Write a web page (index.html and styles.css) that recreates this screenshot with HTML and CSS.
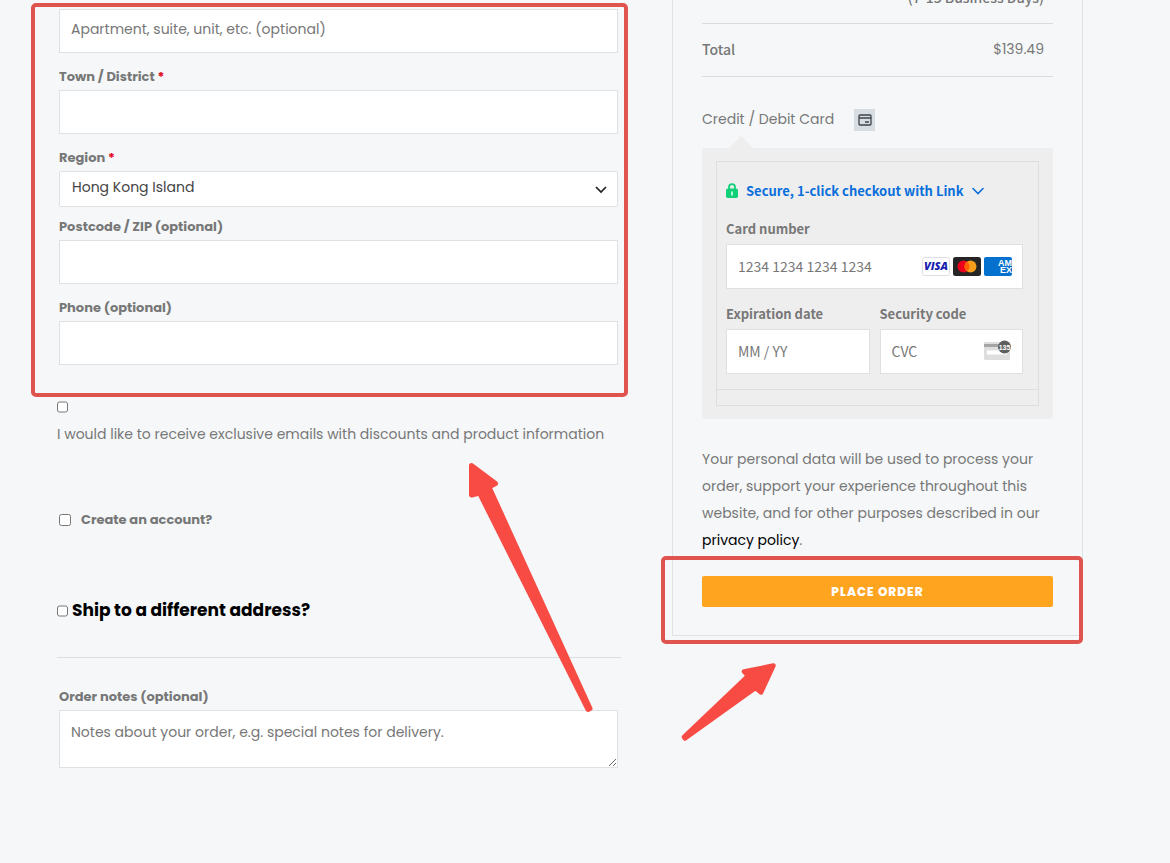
FILE: index.html
```html
<!DOCTYPE html>
<html lang="en">

<head>
    <meta charset="UTF-8">
    <meta name="viewport" content="width=device-width, initial-scale=1.0">
    <title>Checkout</title>
    <link rel="stylesheet" href="styles.css">
</head>

<body>
    <form class="checkout">
        <!-- Billing column -->
        <div class="billing">
            <div class="fields address">
                <input class="input" type="text" placeholder="Apartment, suite, unit, etc. (optional)" aria-label="Apartment, suite, unit, etc.">

                <label class="label" for="town">Town / District <span class="required">*</span></label>
                <input class="input" type="text" id="town">

                <label class="label" for="region">Region <span class="required">*</span></label>
                <div class="select">
                    <select id="region">
                        <option>Hong Kong Island</option>
                        <option>Kowloon</option>
                        <option>New Territories</option>
                    </select>
                    <svg class="select-arrow" width="12" height="8" viewBox="0 0 12 8">
                        <path d="M1 1l5 5 5-5" fill="none" stroke="#222" stroke-width="1.7" />
                    </svg>
                </div>

                <label class="label after-select" for="postcode">Postcode / ZIP (optional)</label>
                <input class="input" type="text" id="postcode">

                <label class="label" for="phone">Phone (optional)</label>
                <input class="input" type="tel" id="phone">
                <div class="mark mark-address"></div>
            </div>

            <div class="newsletter">
                <input class="check" type="checkbox" id="emails">
                <label for="emails">I would like to receive exclusive emails with discounts and product information</label>
            </div>

            <div class="account">
                <input class="check" type="checkbox" id="account">
                <label for="account">Create an account?</label>
            </div>

            <h3 class="shipping">
                <input class="check" type="checkbox" id="ship">
                <label for="ship">Ship to a different address?</label>
            </h3>

            <div class="fields notes">
                <label class="label" for="notes">Order notes (optional)</label>
                <textarea class="input textarea" id="notes" placeholder="Notes about your order, e.g. special notes for delivery."></textarea>
            </div>

            <svg class="arrow arrow-long" width="130" height="256" viewBox="466 458 130 256">
                <path d="M471.500 465.500L495.500 483.500L489 487L590 708.500L588 709.500L479.500 493L471.500 495Z" fill="#f74b43" stroke="#f74b43" stroke-width="5" stroke-linejoin="round" />
            </svg>
        </div>

        <!-- Order column -->
        <div class="order">
            <div class="order-row delivery">(7-15 Business Days)</div>
            <div class="order-row total">
                <strong>Total</strong>
                <span>$139.49</span>
            </div>

            <div class="method">
                <span>Credit / Debit Card</span>
                <span class="method-icon">
                    <svg width="14" height="12" viewBox="0 0 14 12" fill="none" stroke="#3c434a" stroke-width="1.3">
                        <rect x="1" y="1" width="12" height="10" rx="1" />
                        <path d="M1 4h12M7 8h4" />
                    </svg>
                </span>
            </div>

            <div class="payment">
                <div class="card-form">
                    <button class="link-button" type="button">
                        <svg width="12" height="15" viewBox="0 0 12 15">
                            <path d="M3 7V4.200a3 3 0 0 1 6 0V7" fill="none" stroke="#10d078" stroke-width="1.800" />
                            <rect y="5.500" width="12" height="9.500" rx="1.800" fill="#10d078" />
                            <path d="M6 9v3" stroke="#d9ffee" stroke-width="1.600" stroke-linecap="round" />
                        </svg>
                        <span>Secure, 1-click checkout with Link</span>
                        <svg width="12" height="8" viewBox="0 0 12 8">
                            <path d="M1 1.500l5 5 5-5" fill="none" stroke="#0a6fdb" stroke-width="1.600" stroke-linecap="round" />
                        </svg>
                    </button>

                    <label class="card-label" for="card">Card number</label>
                    <div class="card-input">
                        <input type="text" id="card" placeholder="1234 1234 1234 1234">
                        <div class="brands">
                            <svg width="28" height="19" viewBox="0 0 28 19">
                                <rect x=".5" y=".5" width="27" height="18" rx="2" fill="#fff" stroke="#dedede" />
                                <text class="visa" x="14" y="13" text-anchor="middle">VISA</text>
                            </svg>
                            <svg width="28" height="19" viewBox="0 0 28 19">
                                <rect width="28" height="19" rx="2.500" fill="#252525" />
                                <circle cx="10.500" cy="9.500" r="6" fill="#eb001b" />
                                <circle cx="17.500" cy="9.500" r="6" fill="#f79e1b" />
                                <path d="M14 4.630a6 6 0 0 1 0 9.740a6 6 0 0 1 0-9.740" fill="#ff5f00" />
                            </svg>
                            <svg width="28" height="19" viewBox="0 0 28 19">
                                <rect width="28" height="19" rx="2" fill="#0571ce" />
                                <text class="amex" x="14" y="9">AM</text>
                                <text class="amex" x="16" y="16">EX</text>
                            </svg>
                        </div>
                    </div>

                    <div class="card-row">
                        <div class="card-col">
                            <label class="card-label" for="expiry">Expiration date</label>
                            <div class="card-input">
                                <input type="text" id="expiry" placeholder="MM / YY">
                            </div>
                        </div>
                        <div class="card-col">
                            <label class="card-label" for="cvc">Security code</label>
                            <div class="card-input">
                                <input type="text" id="cvc" placeholder="CVC">
                                <svg class="cvc-icon" width="28" height="24" viewBox="0 0 28 24">
                                    <rect y="2" width="26" height="18" rx="1" fill="#dedede" />
                                    <rect y="4" width="26" height="3" fill="#a5a5a5" />
                                    <rect x="3" y="10.500" width="20" height="4" fill="#fff" />
                                    <circle cx="20.500" cy="7" r="6.500" fill="#5f5f5f" />
                                    <text class="digits" x="20.500" y="9.500" text-anchor="middle">135</text>
                                </svg>
                            </div>
                        </div>
                    </div>
                    <div class="card-footer"></div>
                </div>
            </div>

            <p class="privacy">Your personal data will be used to process your order, support your experience throughout this website, and for other purposes described in our <a href="#">privacy policy</a>.</p>

            <div class="place">
                <button class="place-button" type="submit">PLACE ORDER</button>
                <div class="mark mark-place"></div>
            </div>

            <svg class="arrow arrow-short" width="98" height="82" viewBox="681 661 98 82">
                <path d="M773.500 666.500L761 693.500L755.500 689L685 739.500L684 738L748 677L744 672.500Z" fill="#f74b43" stroke="#f74b43" stroke-width="4.500" stroke-linejoin="round" />
            </svg>
        </div>
    </form>
</body>

</html>
```
FILE: styles.css
```css
/* Reset */
* {
    margin: 0;
    padding: 0;
    box-sizing: border-box;
}

body {
    font-family: Poppins, Inter, sans-serif;
    font-size: 14px;
    line-height: 27px;
    color: #777;
    background-color: #f5f7f9;
}

input,
select,
textarea,
button {
    font: inherit;
    color: inherit;
}

::placeholder {
    color: #777;
    opacity: 1;
}

/* Two columns */
.checkout {
    display: grid;
    grid-template-columns: minmax(0, 564fr) minmax(0, 411fr);
    align-items: start;
    gap: 51px;
    padding: 0 87px 0 57px;
}

.billing {
    position: relative;
    padding-top: 9px;
}

.fields {
    position: relative;
    display: flex;
    flex-direction: column;
    padding: 0 3px 0 2px;
}

.label {
    margin-top: 10px;
    font-size: 13px;
    font-weight: 700;
}

.after-select {
    margin-top: 6px;
}

.required {
    color: #e2001a;
}

.input {
    width: 100%;
    height: 44px;
    padding: 0 11px 3px;
    border: 1px solid #dfe2e4;
    background-color: #fff;
}

.select {
    position: relative;
}

.select select {
    display: block;
    width: 100%;
    height: 36px;
    padding: 0 30px 3px 12px;
    border: 1px solid #dfe2e4;
    border-radius: 2px;
    background-color: #fff;
    color: #444;
    appearance: none;
}

.select-arrow {
    position: absolute;
    top: 15px;
    right: 11px;
    pointer-events: none;
}

.check {
    flex: none;
    width: 12px;
    height: 12px;
}

.newsletter {
    display: flex;
    flex-direction: column;
    gap: 8px;
    margin-top: 36px;
    white-space: nowrap;
}

.newsletter .check,
.shipping .check {
    width: 11px;
}

.account {
    display: flex;
    align-items: center;
    gap: 10px;
    margin-top: 58px;
    padding-left: 2px;
    font-size: 13px;
    font-weight: 700;
}

.shipping {
    display: flex;
    align-items: center;
    gap: 4px;
    margin-top: 64px;
    padding-bottom: 33px;
    border-bottom: 1px solid #dcdfe2;
    font-size: 17px;
    font-weight: 700;
    color: #000;
}

.notes {
    padding-top: 15px;
}

.textarea {
    height: 58px;
    padding-top: 8px;
}

/* Order box */
.order {
    position: relative;
    padding: 0 29px 28px;
    border: 1px solid #dfe3e8;
    border-top: 0;
}

.order-row {
    padding-right: 9px;
    border-bottom: 1px solid #d8dbde;
}

.delivery,
.total strong {
    font-family: "Noto Sans CJK SC", sans-serif;
    font-weight: 500;
}

.delivery {
    margin-top: -16px;
    padding-bottom: 12px;
    text-align: right;
}

.total {
    display: flex;
    justify-content: space-between;
    padding-top: 12px;
    padding-bottom: 13px;
}

.method {
    display: flex;
    align-items: center;
    gap: 20px;
    margin-top: 29px;
}

.method-icon {
    display: flex;
    align-items: center;
    justify-content: center;
    width: 21px;
    height: 22px;
    background-color: #d7dde2;
}

.payment {
    position: relative;
    margin-top: 15px;
    padding: 13px 14px;
    border-radius: 3px;
    background-color: #eee;
}

/* Pointer to the selected method */
.payment::before {
    content: "";
    position: absolute;
    top: -12px;
    left: 27px;
    border: 12px solid transparent;
    border-top: 0;
    border-bottom-color: #eee;
}

.card-form {
    padding: 15px 15px 0 9px;
    border: 1px solid #dedede;
    font-family: "Noto Sans CJK SC", sans-serif;
    font-size: 13px;
}

.link-button {
    display: flex;
    align-items: center;
    gap: 8px;
    height: 27px;
    border: 0;
    background: none;
    font-weight: 700;
    color: #0a6fdb;
    white-space: nowrap;
    cursor: pointer;
}

.card-label {
    display: block;
    margin-top: 11px;
    font-weight: 700;
}

.card-input {
    display: flex;
    align-items: center;
    height: 45px;
    margin-top: 2px;
    padding: 0 10px 0 11px;
    border: 1px solid #e0e0e0;
    background-color: #fff;
    font-size: 14px;
}

.card-input input {
    flex: 1;
    min-width: 0;
    height: 27px;
    border: 0;
    background: none;
}

.brands {
    display: flex;
    gap: 3px;
}

.visa {
    font: italic 800 11px "Open Sans", sans-serif;
    fill: #1a1fb0;
}

.amex {
    font: 700 9px "Liberation Sans", sans-serif;
    fill: #fff;
}

.digits {
    font: 700 7px "Liberation Sans", sans-serif;
    fill: #fff;
}

.card-row {
    display: flex;
    gap: 10px;
}

.card-col {
    flex: 1;
    min-width: 0;
}

.card-footer {
    height: 16px;
    margin: 15px -15px 0 -9px;
    border-top: 1px solid #dedede;
}

.privacy {
    margin-top: 27px;
}

.privacy a {
    color: #000;
    text-decoration: none;
}

.place {
    position: relative;
    margin-top: 22px;
}

.place-button {
    display: block;
    width: 100%;
    height: 31px;
    border: 0;
    border-radius: 2px;
    background-color: #ffa41f;
    color: #fff;
    font-size: 12px;
    font-weight: 800;
    letter-spacing: 1px;
    cursor: pointer;
}

/* Red marks drawn over the form */
.mark {
    position: absolute;
    border: 4px solid #e0544f;
    border-radius: 5px;
    pointer-events: none;
}

.mark-address {
    top: -6px;
    right: -7px;
    bottom: -32px;
    left: -26px;
}

.mark-place {
    top: -20px;
    right: -30px;
    bottom: -37px;
    left: -41px;
}

.arrow {
    position: absolute;
    pointer-events: none;
}

.arrow-long {
    top: 458px;
    left: 409px;
}

.arrow-short {
    bottom: -107px;
    left: 8px;
}
```
